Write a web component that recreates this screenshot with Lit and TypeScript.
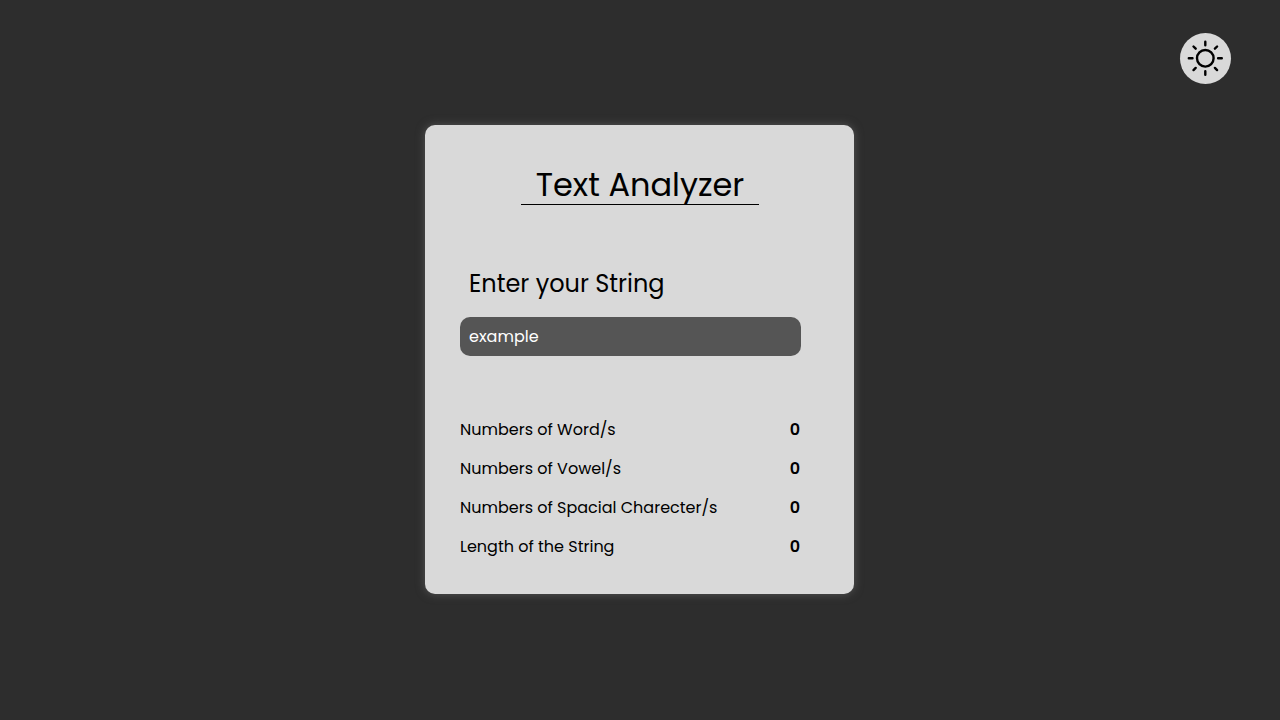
import { LitElement, html, css } from "lit";
import { customElement, state } from "lit/decorators.js";

@customElement("app-root")
export class AppRoot extends LitElement {
  @state() private text = "";
  @state() private light = false;

  static styles = css`
    :host {
      display: block;
      font-family: Poppins, Inter, "Open Sans", sans-serif;
      font-size: 16px;
      line-height: 24px;
      color: #000;
    }
    .page {
      box-sizing: border-box;
      min-height: 100vh;
      display: grid;
      place-items: center;
      position: relative;
      padding: 24px 25px 25px 24px;
      background: #2d2d2d;
    }
    .page.light { background: #f2f2f2; }
    .theme {
      position: absolute;
      top: 33px;
      right: 49px;
      width: 51px;
      height: 51px;
      padding: 0;
      border: 0;
      border-radius: 50%;
      background: #d9d9d9;
      cursor: pointer;
    }
    .theme svg { display: block; width: 51px; height: 51px; }
    .card {
      box-sizing: border-box;
      width: 100%;
      max-width: 429px;
      padding: 40px 53px 35px 35px;
      border-radius: 10px;
      background: #d9d9d9;
      box-shadow: 0 0 10px #555;
    }
    .heading {
      display: flex;
      justify-content: center;
      margin-right: -19px;
    }
    h1 {
      margin: 0;
      padding: 0 15px;
      border-bottom: 1px solid #000;
      font-size: 32px;
      line-height: 39px;
      font-weight: 400;
    }
    label {
      display: block;
      margin: 61px 0 0 9px;
      font-size: 24px;
      line-height: 36px;
    }
    input {
      box-sizing: border-box;
      display: block;
      width: 100%;
      height: 39px;
      margin: 15px 0 62px;
      padding: 0 9px;
      border: 0;
      border-radius: 10px;
      background: #555;
      color: #fff;
      font: inherit;
    }
    input::placeholder { color: #fff; opacity: 1; }
    dl { margin: 0; padding-right: 1px; display: grid; gap: 15px; }
    .row { display: flex; justify-content: space-between; }
    dd { margin: 0; font-weight: 600; }
  `;

  render() {
    const t = this.text;
    const rows: [string, number][] = [
      ["Numbers of Word/s", t.trim() ? t.trim().split(/\s+/).length : 0],
      ["Numbers of Vowel/s", (t.match(/[aeiou]/gi) ?? []).length],
      ["Numbers of Spacial Charecter/s", (t.match(/[^a-z0-9\s]/gi) ?? []).length],
      ["Length of the String", t.length],
    ];
    return html`
      <main class="page ${this.light ? "light" : ""}">
        <button class="theme" aria-label="Toggle theme" @click=${() => (this.light = !this.light)}>
          <svg viewBox="0 0 51 51" fill="none" stroke="#000" stroke-width="2.4" stroke-linecap="round">
            <circle cx="25.3" cy="25.3" r="8.3" />
            <path d="M25.3 8.8v3.5M25.3 38.3v3.5M8.8 25.3h3.7M38.1 25.3h3.7M13.5 13.5l2.2 2.2M34.9 34.9l2.2 2.2M37.1 13.5l-2.2 2.2M15.7 34.9l-2.2 2.2" />
          </svg>
        </button>
        <section class="card">
          <div class="heading"><h1>Text Analyzer</h1></div>
          <label for="source">Enter your String</label>
          <input id="source" type="text" placeholder="example" .value=${t}
            @input=${(e: Event) => (this.text = (e.target as HTMLInputElement).value)} />
          <dl>
            ${rows.map(([name, count]) => html`<div class="row"><dt>${name}</dt><dd>${count}</dd></div>`)}
          </dl>
        </section>
      </main>
    `;
  }
}
